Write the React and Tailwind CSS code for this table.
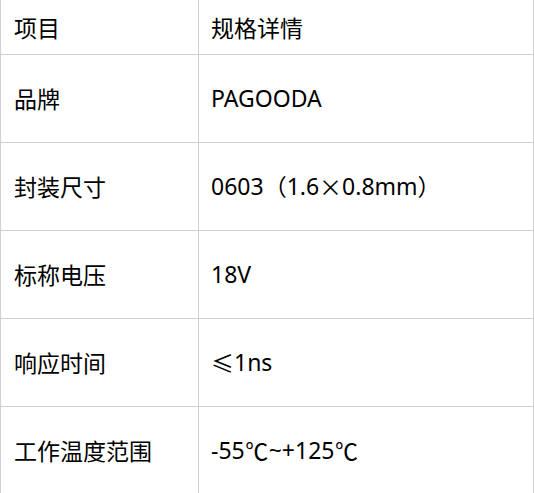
import React from "react"

const cjk = "font-['Noto_Sans_CJK_SC',sans-serif]"
const deg = "inline-block w-[24px] text-center font-['Noto_Sans_CJK_JP',sans-serif]"

const rows = [
  ["品牌", "PAGOODA"],
  [
    "封装尺寸",
    <>
      0603<span className={cjk}>（</span>1.6<span className={cjk}>×</span>0.8mm<span className={cjk}>）</span>
    </>,
  ],
  ["标称电压", "18V"],
  [
    "响应时间",
    <>
      <span className={cjk}>≤</span>1ns
    </>,
  ],
  [
    "工作温度范围",
    <>
      -55<span className={deg}>℃</span>~+125<span className={deg}>℃</span>
    </>,
  ],
]

const Row = ({ name, value, head }) => (
  <div className={`grid grid-cols-[198px_1fr] border-b border-[#d0d0d0] ${head ? "h-[55px]" : "h-[88px]"}`}>
    <div className={`flex items-center pl-[13px] border-r border-[#d0d0d0] ${cjk}`}>{name}</div>
    <div className="flex items-center pl-[12px]">{value}</div>
  </div>
)

export default function App() {
  return (
    <div className="w-[534px] h-[493px] overflow-hidden bg-white">
      <div className="border-l border-r border-[#d0d0d0] text-[23px] text-black font-['Noto_Sans','Noto_Sans_CJK_SC',sans-serif]">
        <Row head name="项目" value={<span className={cjk}>规格详情</span>} />
        {rows.map(([n, v]) => (
          <Row key={n} name={n} value={v} />
        ))}
      </div>
    </div>
  )
}
